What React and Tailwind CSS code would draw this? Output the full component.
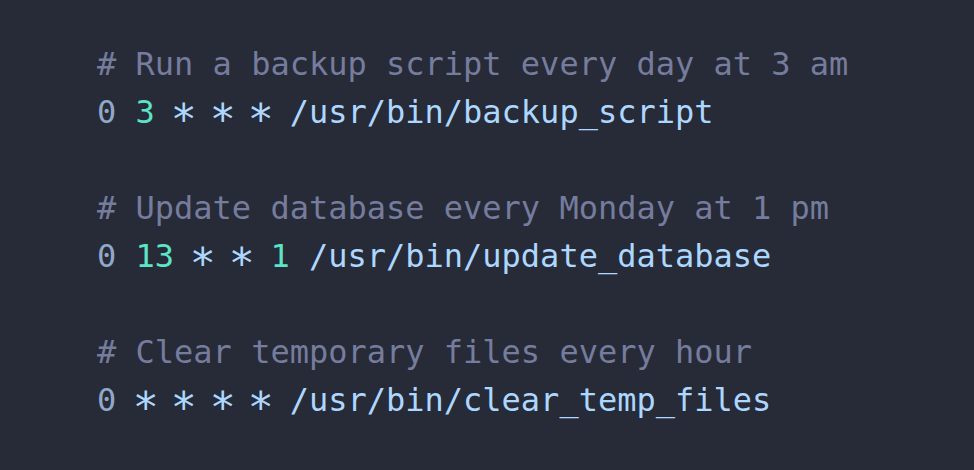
const lines = [
  { comment: "# Run a backup script every day at 3 am", parts: [["0", "min"], [" "], ["3", "num"], [" "], ["*", "star"], [" "], ["*", "star"], [" "], ["*", "star"], [" "], ["/usr/bin/backup_script", "path"]] },
  { comment: "# Update database every Monday at 1 pm", parts: [["0", "min"], [" "], ["13", "num"], [" "], ["*", "star"], [" "], ["*", "star"], [" "], ["1", "num"], [" "], ["/usr/bin/update_database", "path"]] },
  { comment: "# Clear temporary files every hour", parts: [["0", "min"], [" "], ["*", "star"], [" "], ["*", "star"], [" "], ["*", "star"], [" "], ["*", "star"], [" "], ["/usr/bin/clear_temp_files", "path"]] },
];

const colors = {
  min: "text-[#91a9c9]",
  num: "text-[#5de4c7]",
  star: "inline-block text-[#add7ff] translate-y-[7px] scale-[1.35]",
  path: "text-[#add7ff]",
};

export default function App() {
  return (
    <div className="w-[974px] h-[470px] bg-[#262b37] overflow-hidden">
      <pre className="pt-10 pl-[97px] text-[32px] leading-[48px] font-['DejaVu_Sans_Mono',monospace]">
        {lines.map((l, i) => (
          <div key={i} className={i > 0 ? "mt-12" : ""}>
            <div className="text-[#767c9d]">{l.comment}</div>
            <div>
              {l.parts.map(([t, k], j) => (
                <span key={j} className={k ? colors[k] : ""}>{t}</span>
              ))}
            </div>
          </div>
        ))}
      </pre>
    </div>
  );
}
